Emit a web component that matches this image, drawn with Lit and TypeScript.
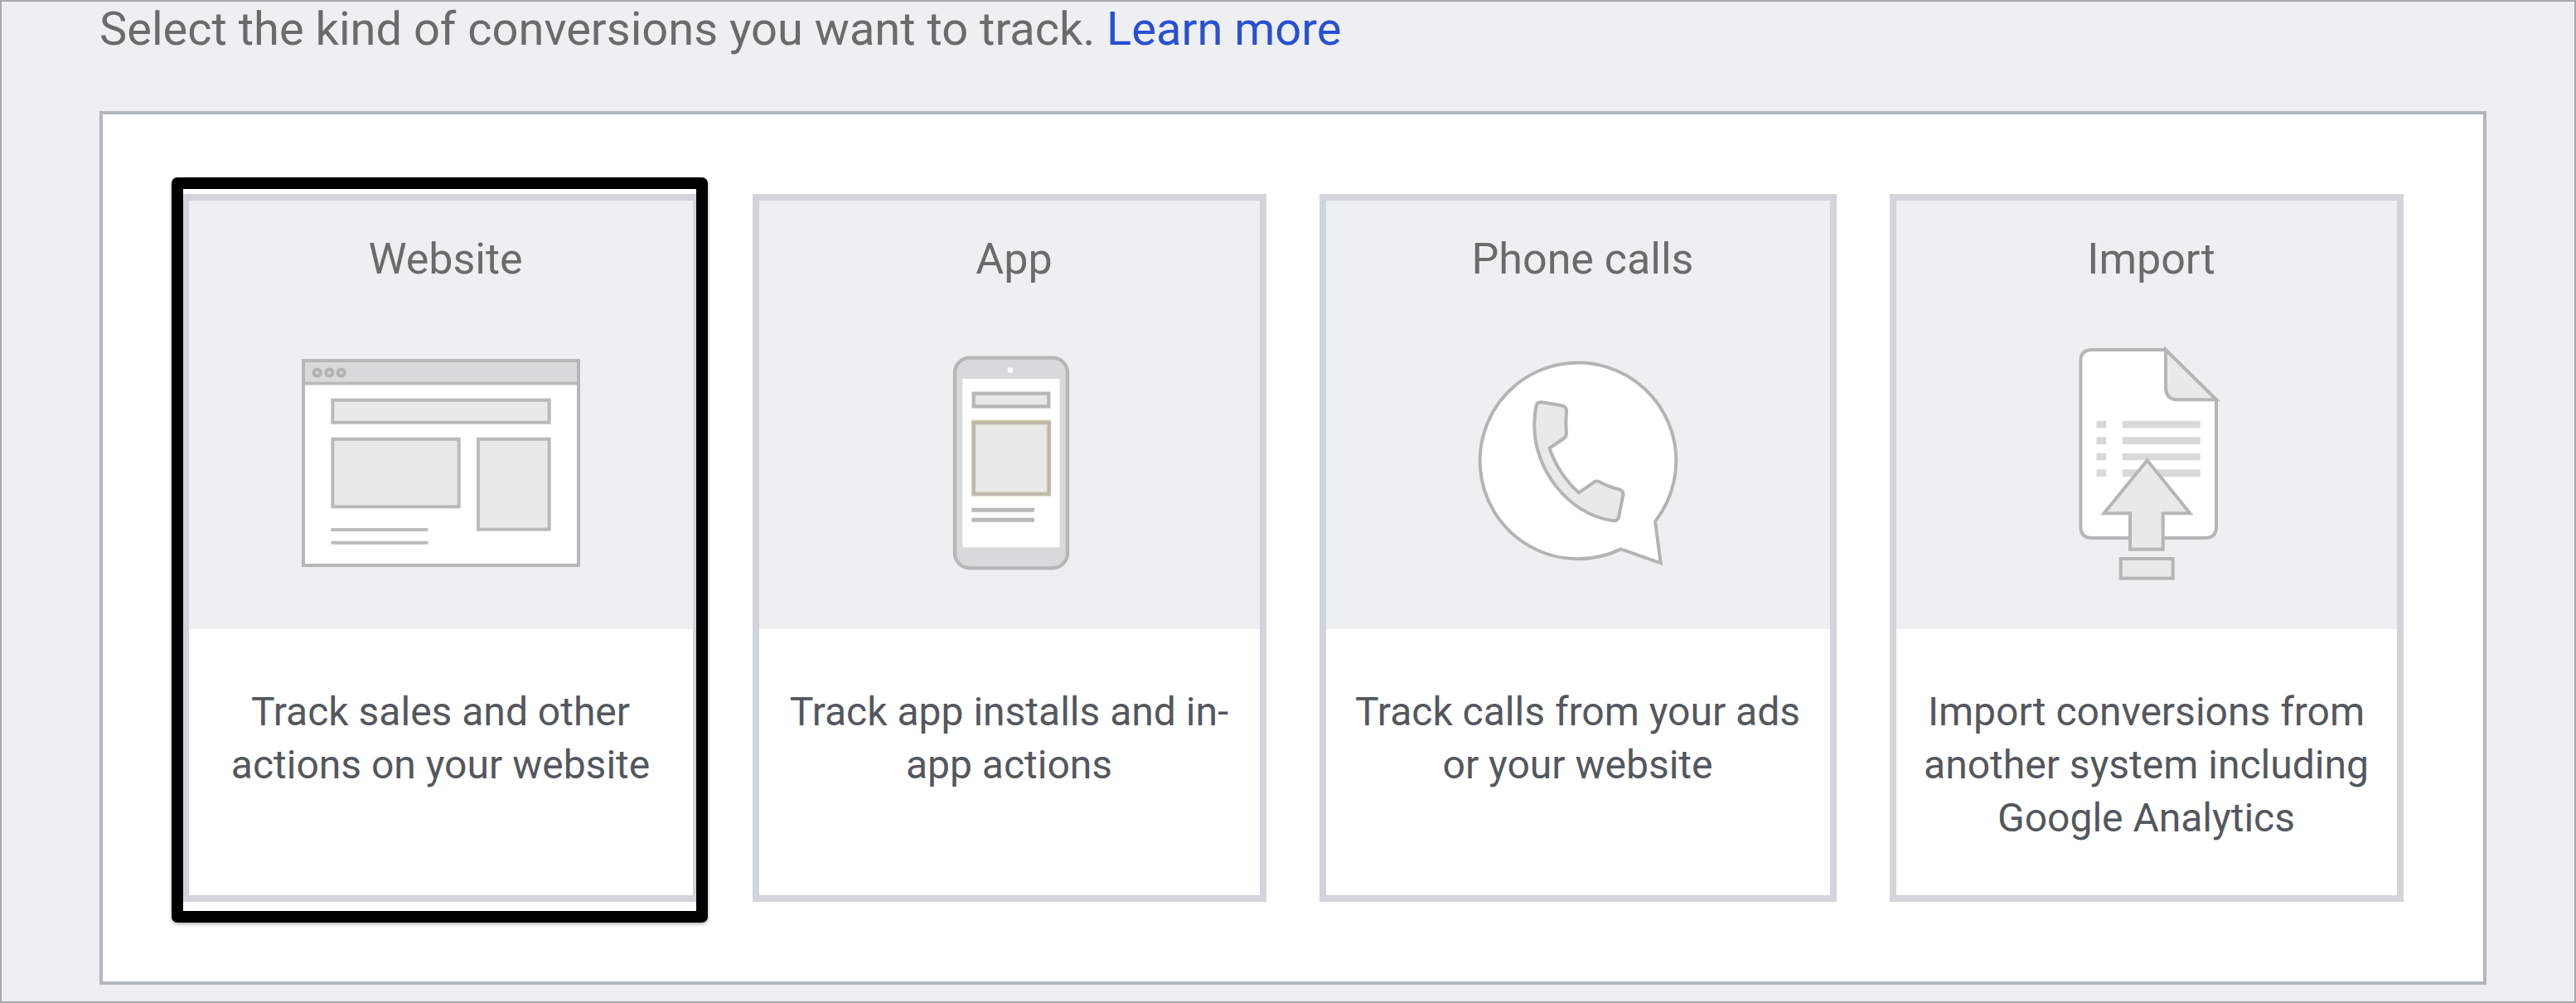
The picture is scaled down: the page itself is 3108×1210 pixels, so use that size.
import { LitElement, html, css, svg, type TemplateResult } from "lit";
import { customElement, property } from "lit/decorators.js";

const websiteIcon = html`<svg width="380" height="300" viewBox="6 0 1140 900" fill="none">
  ${svg`
  <rect x="78" y="75" width="996" height="741" fill="#fff"/>
  <rect x="78" y="75" width="996" height="83" fill="#d9d8da"/>
  <path d="M78 158H1074" stroke="#b9b9b9" stroke-width="11"/>
  <rect x="78" y="75" width="996" height="741" stroke="#b6b7b7" stroke-width="12"/>
  <g stroke="#b3b3b3" stroke-width="13"><circle cx="128" cy="119" r="12"/><circle cx="172" cy="119" r="12"/><circle cx="215" cy="119" r="12"/></g>
  <g fill="#e9e9e9" stroke="#b9b9b9" stroke-width="12">
    <rect x="184" y="218" width="784" height="81"/>
    <rect x="184" y="359" width="457" height="245"/>
    <rect x="711" y="359" width="257" height="327"/>
  </g>
  <path d="M178 687H529M178 734H529" stroke="#bbb" stroke-width="12"/>`}
</svg>`;

const appIcon = html`<svg width="200" height="300" viewBox="-6 0 600 900" fill="none">
  ${svg`
  <rect x="96" y="65" width="408" height="761" rx="54" fill="#d9d8da" stroke="#b6b7b7" stroke-width="13"/>
  <circle cx="297" cy="110" r="10" fill="#fff"/>
  <rect x="124" y="141" width="352" height="610" fill="#fff"/>
  <rect x="164" y="194" width="272" height="47" fill="#e9e9e9" stroke="#b7b7b7" stroke-width="13"/>
  <rect x="164" y="298" width="272" height="260" fill="#e9e9e9" stroke="#d9cca4" stroke-width="16"/>
  <path d="M157 300H443" stroke="#bfb9a8" stroke-width="13"/>
  <path d="M165 306V558H437V300" stroke="#b9b8b4" stroke-width="10"/>
  <path d="M157 616H384M157 652H384" stroke="#b9b9b9" stroke-width="15"/>`}
</svg>`;

const phoneIcon = html`<svg width="300" height="300" viewBox="-18 0 900 900" fill="none" stroke="#b4b4b4" stroke-width="12">
  ${svg`
  <path d="M587 757A355 355 0 1 1 711 657L731 808Z" fill="#fff"/>
  <path d="M301 226L372 238Q391 241 390 261Q386 300 390 337Q390 350 380 357L329 392C344 445 387 512 435 553L487 517Q499 507 512 515Q546 533 578 540Q597 545 595 561L580 638Q576 658 556 654C390 630 274 462 274 315Q273 276 280 240Q284 223 301 226Z" fill="#e9e9e9"/>`}
</svg>`;

const importIcon = html`<svg width="220" height="300" viewBox="0 30 660 900" fill="none" stroke="#b5b6b6" stroke-width="12">
  ${svg`
  <path d="M399 66H132Q91 66 91 107V706Q91 747 132 747H541Q582 747 582 706V247Z" fill="#fff"/>
  <path d="M399 66V202Q399 247 444 247H582Z" fill="#e9e9e9"/>
  <path d="M148 336H184M148 395H184M148 453H184M148 512H184M242 336H524M242 395H524M242 453H524M242 512H524" stroke="#d9d8da" stroke-width="26"/>
  <path d="M332 466L175 658H270V788H389V658H487Z" fill="#e9e9e9"/>
  <rect x="236" y="822" width="189" height="71" fill="#e9e9e9"/>`}
</svg>`;

interface Source {
  title: string;
  lines: string[];
  icon: TemplateResult;
  selected?: boolean;
}

const SOURCES: Source[] = [
  { title: "Website", lines: ["Track sales and other", "actions on your website"], icon: websiteIcon, selected: true },
  { title: "App", lines: ["Track app installs and in-", "app actions"], icon: appIcon },
  { title: "Phone calls", lines: ["Track calls from your ads", "or your website"], icon: phoneIcon },
  { title: "Import", lines: ["Import conversions from", "another system including", "Google Analytics"], icon: importIcon },
];

@customElement("conversion-card")
export class ConversionCard extends LitElement {
  @property({ attribute: false }) source!: Source;

  static styles = css`
    :host { display: block; position: relative; box-sizing: border-box; border: 8px solid #d1d5d9; background: #fff; }
    .head {
      display: flex; flex-direction: column; align-items: center;
      height: 517px; box-sizing: border-box; padding-top: 41px; background: #eeeff1;
    }
    .title { padding-left: 11px; font-size: 52px; line-height: 60px; color: #6a6b6b; }
    svg { display: block; margin-top: 67px; }
    .text { padding: 68px 1px 0 0; text-align: center; font-size: 48px; line-height: 64px; color: #54575d; }
    .line { white-space: nowrap; }
    .marker {
      position: absolute; left: -21px; right: -18px; top: -28px; bottom: -33px;
      border: 14px solid #000; border-radius: 7px; box-shadow: 0 2px 4px rgba(0, 0, 0, 0.3);
    }
  `;

  render() {
    const s = this.source;
    return html`
      <div class="head">
        <div class="title">${s.title}</div>
        ${s.icon}
      </div>
      <div class="text">${s.lines.map((l) => html`<div class="line">${l}</div>`)}</div>
      ${s.selected ? html`<div class="marker"></div>` : null}
    `;
  }
}

@customElement("app-root")
export class AppRoot extends LitElement {
  static styles = css`
    :host {
      display: block; box-sizing: border-box; width: 3108px; height: 1210px; overflow: hidden;
      border: 2px solid #a9a9ab; background: #eeeff1;
      font-family: Roboto, "Liberation Sans", sans-serif;
    }
    .intro { padding: 1px 0 0 118px; font-size: 56px; line-height: 64px; color: #6a6b6b; white-space: nowrap; }
    .link { color: #2850d2; text-decoration: none; }
    .panel {
      display: grid; grid-template-columns: 624px 620px 624px 620px; column-gap: 64px;
      box-sizing: border-box; width: 2880px; height: 1054px; margin: 67px 0 0 118px;
      padding: 96px 0 0 96px; border: 4px solid #b3b7bb; background: #fff;
    }
    .card { height: 854px; }
  `;

  render() {
    return html`
      <div class="intro">Select the kind of conversions you want to track. <a class="link">Learn more</a></div>
      <div class="panel">
        ${SOURCES.map((s) => html`<conversion-card class="card" .source=${s}></conversion-card>`)}
      </div>
    `;
  }
}
